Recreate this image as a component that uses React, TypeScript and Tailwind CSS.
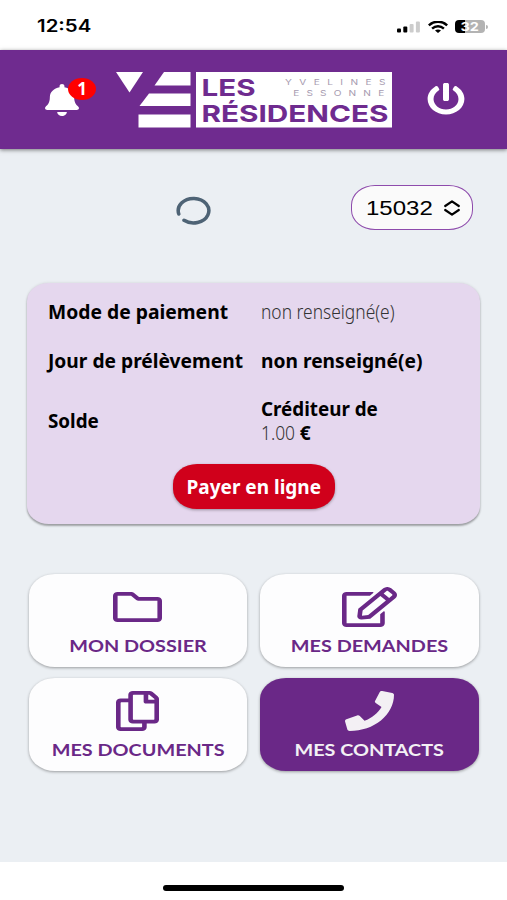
import { FaBell, FaPhone, FaPowerOff, FaRegCopy, FaRegEdit, FaRegFolder } from 'react-icons/fa';
import type { IconType } from 'react-icons';

interface Tile {
  label: string;
  icon: IconType;
  iconClass: string;
  active?: boolean;
}

const tiles: Tile[] = [
  { label: 'MON DOSSIER', icon: FaRegFolder, iconClass: 'w-[49px] h-10' },
  { label: 'MES DEMANDES', icon: FaRegEdit, iconClass: 'w-[55px] h-10' },
  { label: 'MES DOCUMENTS', icon: FaRegCopy, iconClass: 'w-[43px] h-10' },
  { label: 'MES CONTACTS', icon: FaPhone, iconClass: 'w-[49px] h-10', active: true },
];

function StatusBar() {
  return (
    <div className="flex h-[50px] items-center justify-between bg-white pl-[37px] pr-[19px] pt-[3px]">
      <span className="origin-left scale-x-[1.2] font-['Inter'] text-[17px] font-semibold text-black">12:54</span>
      <div className="flex items-center">
        <svg className="mr-2 h-3 w-[23px]" viewBox="0 0 23 12">
          <rect x="0" y="7.5" width="4" height="4" rx="1" fill="#000" />
          <rect x="6.3" y="5.5" width="4" height="6" rx="1" fill="#000" />
          <rect x="12.6" y="3" width="4" height="8.5" rx="1" fill="#ccc" />
          <rect x="18.9" y="0.5" width="4" height="11" rx="1" fill="#ccc" />
        </svg>
        <svg className="mr-[7px] h-3 w-5" viewBox="0 0 20 12" fill="none" stroke="#000" strokeWidth="2.5">
          <path d="M.8 4.4C6-.5 14-.5 19.2 4.4" />
          <path d="M4.1 7.6c3.4-3 8.4-3 11.8 0" />
          <path d="M10 12 7 9.5c1.7-1.5 4.3-1.5 6 0z" fill="#000" stroke="none" />
        </svg>
        <div className="flex h-[13px] w-[30px] items-center justify-center rounded-[4px] bg-[linear-gradient(90deg,#000_32%,#b3b3b3_32%)]">
          <span className="scale-x-[1.2] font-['Inter'] text-[12px] leading-none font-bold text-white">32</span>
        </div>
        <div className="ml-px h-1 w-[2px] rounded-r-full bg-[#b3b3b3]" />
      </div>
    </div>
  );
}

function Logo() {
  return (
    <svg className="h-14 w-[276px]" viewBox="0 0 276 56" fontFamily="Inter, sans-serif">
      <g fill="#fff">
        <path d="M0 0h27L13.5 20.5z" />
        <path d="M48 0h26.5v13.5h-36z" />
        <path d="M33 21.5h41.5V34h-51z" />
        <path d="M22.5 42.5h52v13h-52z" />
        <path d="M80 0h196v55.5H80z" />
      </g>
      <g fill="#6f2b8f" fontSize="23.5" fontWeight="700">
        <text x="85.5" y="24" textLength="54" lengthAdjust="spacingAndGlyphs">LES</text>
        <text x="85.5" y="49.5" textLength="187" lengthAdjust="spacingAndGlyphs">RÉSIDENCES</text>
      </g>
      {/* glyphs are widened, so the letter spacing is given before the scale */}
      <g fill="#a79bb0" fontSize="7.8" transform="scale(1.3 1)">
        <text x="130" y="13.3" letterSpacing="5.7">YVELINES</text>
        <text x="136.3" y="23.6" letterSpacing="5.5">ESSONNE</text>
      </g>
    </svg>
  );
}

function Header() {
  return (
    <header className="relative flex h-[99px] items-center justify-between bg-[#6f2b8f] pr-[42px] pl-[45px] shadow-[0_1px_4px_rgba(0,0,0,0.5)]">
      <div className="relative">
        <FaBell className="h-8 w-[34px] text-white" preserveAspectRatio="none" />
        <span className="absolute -top-[6px] left-[23px] flex h-[22px] w-7 items-center justify-center rounded-[50%] bg-[#ff0000] font-['Noto_Sans'] text-[17px] font-bold text-white">
          1
        </span>
      </div>
      <div className="ml-[2px]">
        <Logo />
      </div>
      <FaPowerOff className="mb-[2px] h-8 w-[38px] text-white" preserveAspectRatio="none" />
    </header>
  );
}

function PaymentCard() {
  return (
    <section className="mx-[27px] flex h-[241px] flex-col items-center rounded-[22px/18px] bg-[#e5d7ee] font-['Noto_Sans'] text-[20px] shadow-[0_2px_2px_rgba(0,0,0,0.3),0_0_3px_rgba(0,0,0,0.12)]">
      <div className="grid w-full grid-cols-[213px_1fr] pt-[14px] pl-[21px] text-black">
        <div className="h-[49px] origin-left scale-x-[0.965] leading-[30px] font-bold whitespace-nowrap">Mode de paiement</div>
        <div className="h-[49px] origin-left scale-x-[0.87] leading-[30px] font-light whitespace-nowrap text-[#333]">non renseigné(e)</div>
        <div className="h-[49px] origin-left scale-x-[0.96] leading-[30px] font-bold whitespace-nowrap">Jour de prélèvement</div>
        <div className="h-[49px] origin-left scale-x-[0.96] leading-[30px] font-bold whitespace-nowrap">non renseigné(e)</div>
        <div className="mt-px origin-left scale-x-[0.94] self-center font-bold">Solde</div>
        <div className="mt-[2px] leading-[24px] whitespace-nowrap">
          <div className="origin-left scale-x-[0.94] font-bold">Créditeur de</div>
          <div className="origin-left scale-x-[0.87]">
            <span className="font-light text-[#333]">1.00</span> <span className="ml-px inline-block scale-x-[1.1] font-bold">€</span>
          </div>
        </div>
      </div>
      <button className="mt-[19px] h-[45px] w-[162px] rounded-[24px/20px] bg-[#d0001b] font-bold whitespace-nowrap text-white shadow-[0_1px_3px_rgba(0,0,0,0.35)]">
        <span className="inline-block scale-x-[0.95]">Payer en ligne</span>
      </button>
    </section>
  );
}

function TileButton({ label, icon: Icon, iconClass, active }: Tile) {
  return (
    <button
      className={`flex h-[93px] flex-col items-center rounded-[26px/21px] pt-[13px] shadow-[0_1px_3px_rgba(0,0,0,0.35)] ${
        active ? 'bg-[#6a2887] text-[#f3f0f4]' : 'bg-[#fdfdfe] text-[#6a2887]'
      }`}
    >
      <Icon className={iconClass} preserveAspectRatio="none" />
      <span className="mt-[7px] inline-block scale-x-[1.165] font-['Lato'] text-[17px] leading-6 font-bold whitespace-nowrap">{label}</span>
    </button>
  );
}

export default function App() {
  return (
    <div className="flex h-[900px] w-[507px] flex-col overflow-hidden bg-white">
      <StatusBar />
      <Header />
      <main className="flex-1 bg-[#ebeff3]">
        <div className="flex h-[134px] items-start justify-between pt-9 pr-[34px] pl-[175px]">
          <svg className="mt-[10px] h-[30px] w-9" viewBox="0 0 36 30" fill="none" stroke="#4e6375" strokeWidth="3.5" strokeLinecap="round">
            <path d="M3.8 19A15.3 12.3 0 1 1 9 25.3" />
          </svg>
          <button className="flex h-[45px] w-[122px] items-center rounded-[24px/20px] border-[1.5px] border-[#8e4bac] bg-[#fafafa] pl-[14px] font-['Liberation_Sans'] text-[20px] text-black">
            <span className="origin-left scale-x-[1.2]">15032</span>
            <svg className="ml-[22px] h-4 w-4" viewBox="0 0 16 16" fill="none" stroke="#000" strokeWidth="2.2" strokeLinecap="round" strokeLinejoin="round">
              <path d="M1.2 6 8 1.4 14.8 6M1.2 10 8 14.6l6.8-4.6" />
            </svg>
          </button>
        </div>
        <PaymentCard />
        <div className="mx-[28.5px] mt-[50px] grid grid-cols-2 gap-x-[13px] gap-y-[11px]">
          {tiles.map((tile) => (
            <TileButton key={tile.label} {...tile} />
          ))}
        </div>
      </main>
      <footer className="flex h-[38px] justify-center bg-white pt-[23px]">
        <div className="h-[6px] w-[181px] rounded-full bg-black" />
      </footer>
    </div>
  );
}
